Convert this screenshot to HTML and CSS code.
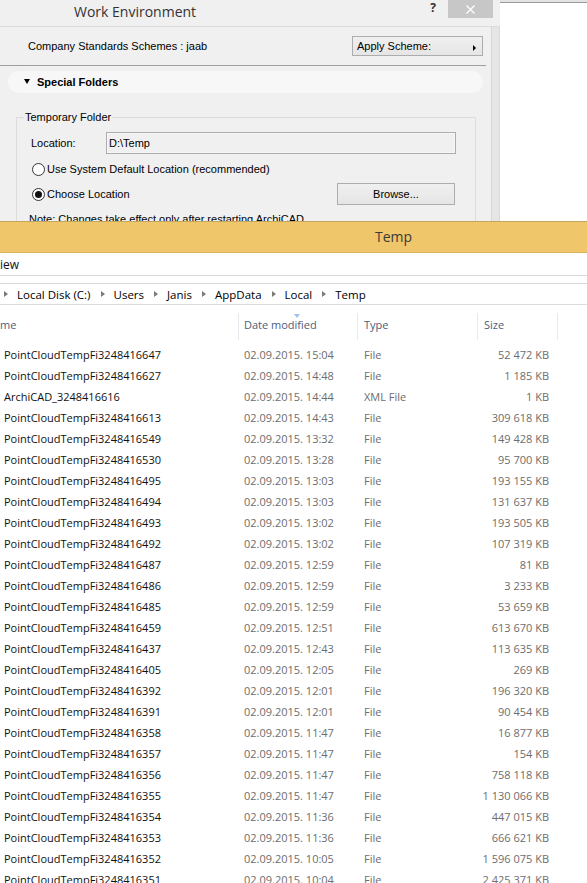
FILE: index.html
```html
<!DOCTYPE html>
<html lang="en">
<head>
<meta charset="utf-8">
<title>Work Environment / Temp</title>
<link rel="stylesheet" href="styles.css">
</head>
<body>
<div class="top">
  <div class="dlg">
    <div class="dlg-title">
      <span class="dlg-name">Work Environment</span>
      <span class="help">?</span>
      <span class="close"><svg width="9" height="9" viewBox="0 0 9 9"><path d="M0.5 0.5 L8.5 8.5 M8.5 0.5 L0.5 8.5" stroke="#fff" stroke-width="1.3" fill="none"/></svg></span>
    </div>
    <div class="dlg-main">
      <div class="dlg-body">
        <div class="scheme-row">
          <span>Company Standards Schemes : jaab</span>
          <div class="btn apply"><span>Apply Scheme:</span><span class="tri-r"></span></div>
        </div>
        <div class="sep-line"></div>
        <div class="pill"><span class="tri-d"></span><span>Special Folders</span></div>
        <fieldset class="group">
          <legend>Temporary Folder</legend>
          <div class="loc-row"><span class="loc-label">Location:</span><div class="field">D:\Temp</div></div>
          <div class="radio-row r1"><span class="radio"></span><span>Use System Default Location (recommended)</span></div>
          <div class="radio-row r2"><span class="radio on"></span><span>Choose Location</span><div class="btn browse">Browse...</div></div>
          <div class="note">Note: Changes take effect only after restarting ArchiCAD</div>
        </fieldset>
      </div>
      <div class="dlg-strip"></div>
    </div>
  </div>
  <div class="side"></div>
</div>

<div class="exp">
  <div class="exp-title">Temp</div>
  <div class="ribbon">iew</div>
  <div class="addr">
    <span class="chev first"></span><span>Local Disk (C:)</span>
    <span class="chev"></span><span>Users</span>
    <span class="chev"></span><span>Janis</span>
    <span class="chev"></span><span>AppData</span>
    <span class="chev"></span><span>Local</span>
    <span class="chev"></span><span>Temp</span>
  </div>
  <div class="list">
    <div class="hdr">
      <div class="c name">me</div>
      <div class="c date">Date modified<span class="sort"></span></div>
      <div class="c type">Type</div>
      <div class="c size">Size</div>
      <div class="c end"></div>
    </div>
    <div class="row"><div class="name">PointCloudTempFi3248416647</div><div class="date">02.09.2015. 15:04</div><div class="type">File</div><div class="size">52 472 KB</div></div>
    <div class="row"><div class="name">PointCloudTempFi3248416627</div><div class="date">02.09.2015. 14:48</div><div class="type">File</div><div class="size">1 185 KB</div></div>
    <div class="row"><div class="name">ArchiCAD_3248416616</div><div class="date">02.09.2015. 14:44</div><div class="type">XML File</div><div class="size">1 KB</div></div>
    <div class="row"><div class="name">PointCloudTempFi3248416613</div><div class="date">02.09.2015. 14:43</div><div class="type">File</div><div class="size">309 618 KB</div></div>
    <div class="row"><div class="name">PointCloudTempFi3248416549</div><div class="date">02.09.2015. 13:32</div><div class="type">File</div><div class="size">149 428 KB</div></div>
    <div class="row"><div class="name">PointCloudTempFi3248416530</div><div class="date">02.09.2015. 13:28</div><div class="type">File</div><div class="size">95 700 KB</div></div>
    <div class="row"><div class="name">PointCloudTempFi3248416495</div><div class="date">02.09.2015. 13:03</div><div class="type">File</div><div class="size">193 155 KB</div></div>
    <div class="row"><div class="name">PointCloudTempFi3248416494</div><div class="date">02.09.2015. 13:03</div><div class="type">File</div><div class="size">131 637 KB</div></div>
    <div class="row"><div class="name">PointCloudTempFi3248416493</div><div class="date">02.09.2015. 13:02</div><div class="type">File</div><div class="size">193 505 KB</div></div>
    <div class="row"><div class="name">PointCloudTempFi3248416492</div><div class="date">02.09.2015. 13:02</div><div class="type">File</div><div class="size">107 319 KB</div></div>
    <div class="row"><div class="name">PointCloudTempFi3248416487</div><div class="date">02.09.2015. 12:59</div><div class="type">File</div><div class="size">81 KB</div></div>
    <div class="row"><div class="name">PointCloudTempFi3248416486</div><div class="date">02.09.2015. 12:59</div><div class="type">File</div><div class="size">3 233 KB</div></div>
    <div class="row"><div class="name">PointCloudTempFi3248416485</div><div class="date">02.09.2015. 12:59</div><div class="type">File</div><div class="size">53 659 KB</div></div>
    <div class="row"><div class="name">PointCloudTempFi3248416459</div><div class="date">02.09.2015. 12:51</div><div class="type">File</div><div class="size">613 670 KB</div></div>
    <div class="row"><div class="name">PointCloudTempFi3248416437</div><div class="date">02.09.2015. 12:43</div><div class="type">File</div><div class="size">113 635 KB</div></div>
    <div class="row"><div class="name">PointCloudTempFi3248416405</div><div class="date">02.09.2015. 12:05</div><div class="type">File</div><div class="size">269 KB</div></div>
    <div class="row"><div class="name">PointCloudTempFi3248416392</div><div class="date">02.09.2015. 12:01</div><div class="type">File</div><div class="size">196 320 KB</div></div>
    <div class="row"><div class="name">PointCloudTempFi3248416391</div><div class="date">02.09.2015. 12:01</div><div class="type">File</div><div class="size">90 454 KB</div></div>
    <div class="row"><div class="name">PointCloudTempFi3248416358</div><div class="date">02.09.2015. 11:47</div><div class="type">File</div><div class="size">16 877 KB</div></div>
    <div class="row"><div class="name">PointCloudTempFi3248416357</div><div class="date">02.09.2015. 11:47</div><div class="type">File</div><div class="size">154 KB</div></div>
    <div class="row"><div class="name">PointCloudTempFi3248416356</div><div class="date">02.09.2015. 11:47</div><div class="type">File</div><div class="size">758 118 KB</div></div>
    <div class="row"><div class="name">PointCloudTempFi3248416355</div><div class="date">02.09.2015. 11:47</div><div class="type">File</div><div class="size">1 130 066 KB</div></div>
    <div class="row"><div class="name">PointCloudTempFi3248416354</div><div class="date">02.09.2015. 11:36</div><div class="type">File</div><div class="size">447 015 KB</div></div>
    <div class="row"><div class="name">PointCloudTempFi3248416353</div><div class="date">02.09.2015. 11:36</div><div class="type">File</div><div class="size">666 621 KB</div></div>
    <div class="row"><div class="name">PointCloudTempFi3248416352</div><div class="date">02.09.2015. 10:05</div><div class="type">File</div><div class="size">1 596 075 KB</div></div>
    <div class="row"><div class="name">PointCloudTempFi3248416351</div><div class="date">02.09.2015. 10:04</div><div class="type">File</div><div class="size">2 425 371 KB</div></div>
  </div>
</div>
</body>
</html>
```

FILE: styles.css
```css
* { box-sizing: border-box; }
html, body { margin: 0; padding: 0; }
body {
  width: 587px;
  height: 883px;
  overflow: hidden;
  background: #fff;
  font-family: "Open Sans", "Noto Sans", sans-serif;
}

/* ---------- ArchiCAD dialog ---------- */
.top {
  display: flex;
  height: 221px;
  overflow: hidden;
}
.dlg {
  width: 500px;
  background: #f0f0f0;
  display: flex;
  flex-direction: column;
  font-family: "Liberation Sans", Arial, sans-serif;
  font-size: 11px;
  color: #000;
}
.dlg-title {
  height: 27px;
  flex: none;
  display: flex;
  align-items: flex-start;
  padding-left: 74px;
  padding-right: 7px;
  border-bottom: 1px solid #dcdcdc;
  font-family: "Open Sans", sans-serif;
}
.dlg-name {
  font-size: 14px;
  color: #333;
  line-height: 18px;
  margin-top: 3px;
}
.help {
  margin-left: auto;
  margin-right: 12px;
  font-weight: bold;
  font-size: 12px;
  line-height: 16px;
  color: #333;
}
.close {
  width: 45px;
  height: 18px;
  background: #c7c7c7;
  display: flex;
  align-items: center;
  justify-content: center;
}
.dlg-main {
  flex: 1;
  display: flex;
}
.dlg-body {
  width: 492px;
  border-right: 1px solid #d6d6d6;
}
.dlg-strip {
  flex: 1;
  background: #e6e6e6;
  border-right: 1px solid #d9d9d9;
}
.scheme-row {
  height: 38px;
  display: flex;
  align-items: center;
  justify-content: space-between;
  padding: 0 8px 0 28px;
}
.btn {
  border: 1px solid #adadad;
  background: linear-gradient(#f0f0f0, #e5e5e5);
  display: flex;
  align-items: center;
}
.apply {
  width: 131px;
  height: 20px;
  padding: 0 6px 0 4px;
  justify-content: space-between;
}
.tri-r {
  width: 0;
  height: 0;
  border-left: 3px solid #000;
  border-top: 3.5px solid transparent;
  border-bottom: 3.5px solid transparent;
  margin-top: 3px;
}
.sep-line {
  height: 1px;
  background: #a0a0a0;
  margin-right: 5px;
}
.pill {
  margin: 5px 8px 0 8px;
  height: 22px;
  border-radius: 11px;
  background: #f7f7f7;
  display: flex;
  align-items: center;
  padding-left: 16px;
  font-weight: bold;
  font-size: 11px;
}
.tri-d {
  width: 0;
  height: 0;
  border-top: 5px solid #000;
  border-left: 3.5px solid transparent;
  border-right: 3.5px solid transparent;
  margin-right: 7px;
  margin-top: -2px;
}
.group {
  margin: 18px 0 0 16px;
  width: 460px;
  border: 1px solid #dcdcdc;
  padding: 0 19px 0 14px;
  min-width: 0;
}
.group legend {
  padding: 0 1px;
  margin-left: -7px;
  line-height: 13px;
  font-size: 11px;
}
.loc-row {
  margin-top: 8px;
  height: 22px;
  display: flex;
  align-items: center;
}
.loc-label { width: 75px; }
.field {
  flex: 1;
  height: 22px;
  border: 1px solid #adadad;
  box-shadow: inset 0 0 0 1px #f7f7f7;
  background: #f0f0f0;
  padding-left: 2px;
  display: flex;
  align-items: center;
}
.radio-row {
  height: 22px;
  display: flex;
  align-items: center;
  margin-left: 1px;
}
.r1 { margin-top: 4px; }
.r2 { margin-top: 3px; }
.radio {
  width: 13px;
  height: 13px;
  border-radius: 50%;
  border: 1px solid #333;
  background: #fff;
  margin-right: 2px;
  display: flex;
  align-items: center;
  justify-content: center;
}
.radio.on::after {
  content: "";
  width: 7px;
  height: 7px;
  border-radius: 50%;
  background: #111;
}
.browse {
  margin-left: auto;
  margin-right: 1px;
  width: 118px;
  height: 22px;
  justify-content: center;
}
.note {
  margin-top: 8px;
  margin-left: -2px;
  line-height: 13px;
}
.side {
  flex: 1;
  background: linear-gradient(#e3e3e3 0 2px, #9a9a9a 2px 3px, #fff 3px);
}

/* ---------- Explorer ---------- */
.exp {
  font-family: "Open Sans", "Noto Sans", sans-serif;
  font-size: 11px;
}
.exp-title {
  height: 32px;
  background: #efc669;
  border-top: 1px solid #c3a55c;
  border-bottom: 1px solid #d6b462;
  padding-left: 200px;
  text-align: center;
  font-size: 14px;
  line-height: 30px;
  color: #3a3a3a;
}
.ribbon {
  height: 23px;
  border-bottom: 1px solid #dadada;
  font-size: 12px;
  line-height: 20px;
  padding-top: 2px;
  color: #111;
}
.addr {
  margin-top: 7px;
  height: 22px;
  border-top: 1px solid #d9d9d9;
  border-bottom: 1px solid #dcdcdc;
  display: flex;
  align-items: center;
  font-size: 11.5px;
  color: #000;
}
.chev {
  width: 0;
  height: 0;
  border-left: 4px solid #7a7a7a;
  border-top: 3.5px solid transparent;
  border-bottom: 3.5px solid transparent;
  margin: 0 9px 0 10px;
}
.chev.first { margin-left: 4px; }
.list { margin-top: 8px; }
.hdr, .row {
  display: grid;
  grid-template-columns: 238px 119px 120px 80px 1fr;
}
.hdr {
  height: 27px;
  margin-bottom: 4px;
  color: #4c607a;
  line-height: 24px;
}
.hdr .c { height: 27px; }
.hdr .date, .hdr .type, .hdr .size, .hdr .end {
  border-left: 1px solid #e6e9ed;
}
.hdr .date { padding-left: 5px; position: relative; }
.hdr .type { padding-left: 6px; }
.hdr .size { padding-left: 6px; }
.sort {
  position: absolute;
  left: 55px;
  top: 1px;
  width: 0;
  height: 0;
  border-top: 4px solid #9fc2e6;
  border-left: 3.5px solid transparent;
  border-right: 3.5px solid transparent;
}
.row {
  height: 21px;
  line-height: 21px;
  color: #6d6d6d;
  white-space: nowrap;
}
.row .name { color: #111; padding-left: 4px; }
.row .date { padding-left: 6px; }
.row .type { padding-left: 7px; }
.row .size { text-align: right; padding-right: 8px; }
```
